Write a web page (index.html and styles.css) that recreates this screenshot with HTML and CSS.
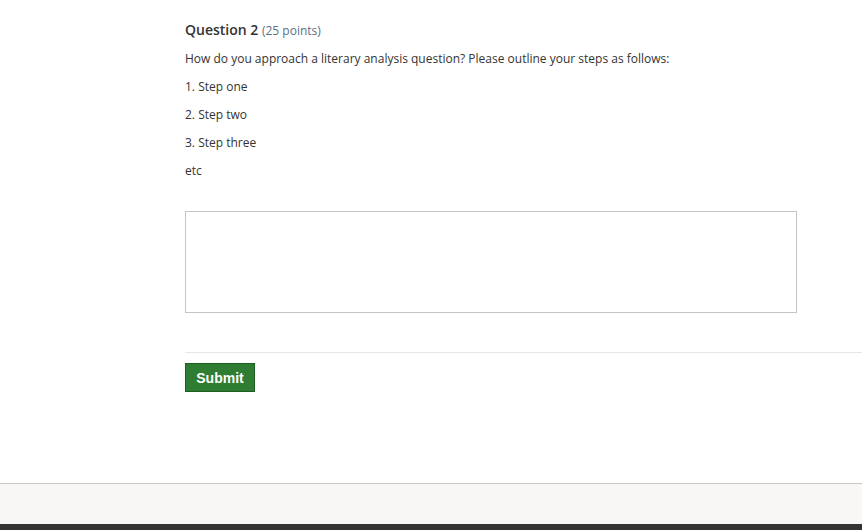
FILE: index.html
```html
<!DOCTYPE html>
<html>
<head>
<meta charset="utf-8">
<link rel="stylesheet" href="styles.css">
</head>
<body>
<main class="content">
  <h2 class="q-title">Question 2 <span class="points">(25 points)</span></h2>
  <p class="q-text">How do you approach a literary analysis question? Please outline your steps as follows:</p>
  <p class="q-text">1. Step one</p>
  <p class="q-text">2. Step two</p>
  <p class="q-text">3. Step three</p>
  <p class="q-text">etc</p>
  <textarea class="answer"></textarea>
  <div class="actions">
    <button class="submit">Submit</button>
  </div>
</main>
<footer class="footer"></footer>
<div class="bottom-bar"></div>
</body>
</html>
```
FILE: styles.css
```css
html, body {
  margin: 0;
  padding: 0;
  background: #fff;
}
body {
  font-family: "Open Sans", sans-serif;
  color: #333;
}
.content {
  padding: 20px 0 0 185px;
  height: 483px;
  box-sizing: border-box;
}
.q-title {
  margin: 0;
  font-size: 14px;
  font-weight: 600;
  line-height: 20px;
  color: #333;
}
.points {
  font-size: 12px;
  font-weight: 400;
  color: #5a6f86;
}
.q-text {
  margin: 8px 0 0;
  font-size: 12px;
  line-height: 20px;
  color: #333;
}
.answer {
  display: block;
  margin: 30px 0 0;
  width: 612px;
  height: 102px;
  box-sizing: border-box;
  border: 1px solid #c4c4c4;
  resize: none;
  background: #fff;
}
.actions {
  margin-top: 39px;
  border-top: 1px solid #e6e6e6;
  padding-top: 10px;
}
.submit {
  display: block;
  width: 70px;
  height: 29px;
  background: #2e7d32;
  border: 1px solid #1e5e22;
  color: #fff;
  font-family: "Liberation Sans", Arial, sans-serif;
  font-weight: bold;
  font-size: 14px;
  padding: 0;
  border-radius: 0;
}
.footer {
  height: 40px;
  background: #f8f7f5;
  border-top: 1px solid #cbc7c3;
}
.bottom-bar {
  height: 6px;
  background: #333;
}
```
